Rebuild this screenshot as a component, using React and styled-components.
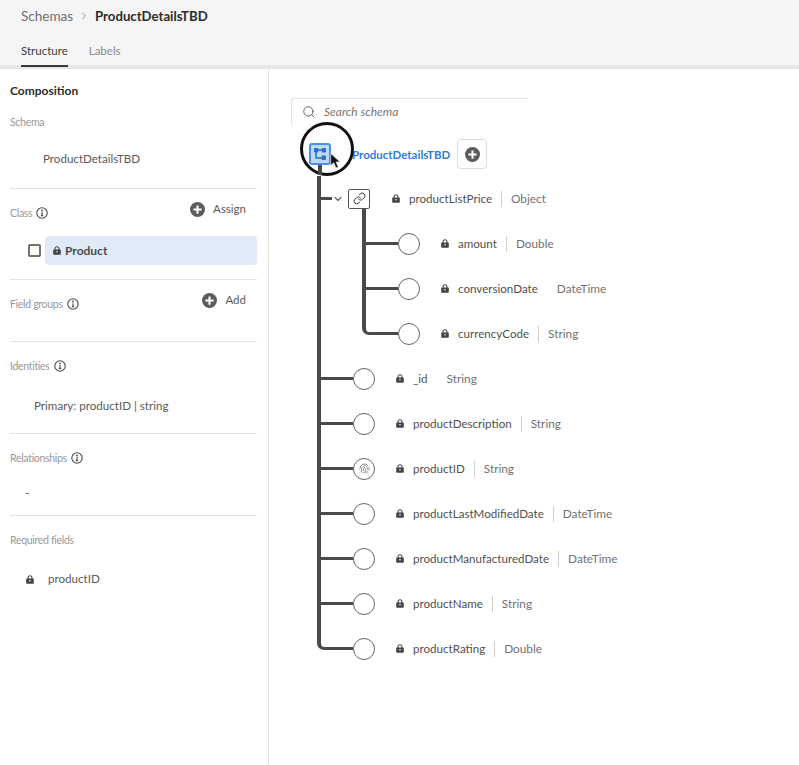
import React from 'react';
import styled, { createGlobalStyle } from 'styled-components';
import { ChevronRight, ChevronDown, Search, Link as LinkIcon, Fingerprint } from 'lucide-react';

const GlobalStyle = createGlobalStyle`
  html, body {
    margin: 0;
    padding: 0;
    background: #fff;
  }
  body {
    font-family: Lato, "Open Sans", sans-serif;
    color: #4b4b4b;
  }
`;

const rootFields = [
  { name: '_id', type: 'String', plain: true },
  { name: 'productDescription', type: 'String' },
  { name: 'productID', type: 'String', identity: true },
  { name: 'productLastModifiedDate', type: 'DateTime' },
  { name: 'productManufacturedDate', type: 'DateTime' },
  { name: 'productName', type: 'String' },
  { name: 'productRating', type: 'Double' },
];

const priceFields = [
  { name: 'amount', type: 'Double' },
  { name: 'conversionDate', type: 'DateTime', plain: true },
  { name: 'currencyCode', type: 'String' },
];

const LockGlyph = ({ size = 8 }) => (
  <svg width={size} height={size + 1} viewBox="0 0 8 9" aria-hidden="true">
    <path
      fillRule="evenodd"
      fill="#444"
      d="M1.5 3.4V2.6C1.5 1.2 2.6.2 4 .2s2.5 1 2.5 2.4v.8h.6c.4 0 .7.3.7.7v3.9c0 .4-.3.7-.7.7H.9c-.4 0-.7-.3-.7-.7V4.1c0-.4.3-.7.7-.7h.6zm1.1 0h2.8v-.8C5.4 1.8 4.8 1.2 4 1.2s-1.4.6-1.4 1.4v.8zM4 5a.8.8 0 0 0-.8.8c0 .4.3.8.8.8s.8-.4.8-.8A.8.8 0 0 0 4 5z"
    />
  </svg>
);

const PlusGlyph = ({ size = 15 }) => (
  <svg width={size} height={size} viewBox="0 0 16 16" aria-hidden="true">
    <circle cx="8" cy="8" r="8" fill="#5c5c5c" />
    <path d="M8 3.6v8.8M3.6 8h8.8" stroke="#fff" strokeWidth="2.2" />
  </svg>
);

const InfoGlyph = () => (
  <svg width="12" height="12" viewBox="0 0 12 12" aria-hidden="true">
    <circle cx="6" cy="6" r="5.2" fill="none" stroke="#4b4b4b" strokeWidth="1.1" />
    <circle cx="6" cy="3.5" r=".9" fill="#4b4b4b" />
    <path d="M6 5.2v3.2M4.9 8.6h2.2" stroke="#4b4b4b" strokeWidth="1.2" />
  </svg>
);

const SchemaGlyph = () => (
  <svg width="14" height="14" viewBox="0 0 14 14" aria-hidden="true">
    <path d="M3 3h7M3 3v8h7" fill="none" stroke="#2c6fc4" strokeWidth="1.5" />
    <rect x="1" y="1" width="4.4" height="4.4" rx=".8" fill="#2c6fc4" />
    <rect x="8.6" y="1" width="4.4" height="4.4" rx=".8" fill="#2c6fc4" />
    <rect x="8.6" y="8.6" width="4.4" height="4.4" rx=".8" fill="#2c6fc4" />
  </svg>
);

const CursorGlyph = () => (
  <svg width="12" height="18" viewBox="0 0 16 22" aria-hidden="true">
    <path d="M1 1v16l4-3.6 3 7 3-1.3-3-6.8h5.4z" fill="#111" stroke="#dcdcdc" strokeWidth="1" />
  </svg>
);

const FieldLabel = ({ field }) => (
  <>
    <LockBox><LockGlyph /></LockBox>
    <FieldName>{field.name}</FieldName>
    <FieldType $plain={field.plain}>{field.type}</FieldType>
  </>
);

const SectionHead = ({ label, info, action }) => (
  <HeadRow>
    <SectionLabel>
      {label}
      {info && <InfoGlyph />}
    </SectionLabel>
    {action && (
      <ActionButton>
        <PlusGlyph />
        {action}
      </ActionButton>
    )}
  </HeadRow>
);

const App = () => (
  <Page>
    <GlobalStyle />
    <Header>
      <Breadcrumb>
        <Crumb>Schemas</Crumb>
        <ChevronRight size={12} color="#8e8e8e" />
        <CurrentCrumb>ProductDetailsTBD</CurrentCrumb>
      </Breadcrumb>
      <Tabs>
        <Tab $active>Structure</Tab>
        <Tab>Labels</Tab>
      </Tabs>
    </Header>
    <Body>
      <Sidebar>
        <Section $pad={21}>
          <Title>Composition</Title>
          <SectionLabel $top={15}>Schema</SectionLabel>
          <Value $top={21} $left={33}>ProductDetailsTBD</Value>
        </Section>
        <Section $pad={14}>
          <SectionHead label="Class" info action="Assign" />
          <ClassRow>
            <Checkbox />
            <ClassChip>
              <LockGlyph />
              Product
            </ClassChip>
          </ClassRow>
        </Section>
        <Section $pad={29} $lead={17}>
          <SectionHead label="Field groups" info action="Add" />
        </Section>
        <Section $pad={19}>
          <SectionHead label="Identities" info />
          <Value $top={24} $left={24}>Primary: productID | string</Value>
        </Section>
        <Section $pad={14}>
          <SectionHead label="Relationships" info />
          <Value $top={19} $left={15}>-</Value>
        </Section>
        <Section $pad={0}>
          <SectionHead label="Required fields" />
          <RequiredRow>
            <LockGlyph />
            productID
          </RequiredRow>
        </Section>
      </Sidebar>
      <Canvas>
        <SearchBox>
          <Search size={14} color="#555" strokeWidth={1.6} />
          <SearchText>Search schema</SearchText>
        </SearchBox>
        <RootRow>
          <Lens />
          <RootIcon><SchemaGlyph /></RootIcon>
          <Pointer><CursorGlyph /></Pointer>
          <RootName>ProductDetailsTBD</RootName>
          <AddButton><PlusGlyph /></AddButton>
        </RootRow>
        <FieldTree>
          <FieldRow>
            <Stem $width={15} />
            <ChevronDown size={12} color="#666" strokeWidth={2.4} />
            <LinkNode><LinkIcon size={13} color="#333" strokeWidth={1.8} /></LinkNode>
            <ObjectLabel><FieldLabel field={{ name: 'productListPrice', type: 'Object' }} /></ObjectLabel>
          </FieldRow>
          <Nested>
            <NestedList>
              {priceFields.map((field, i) => (
                <FieldRow key={field.name}>
                  <Stem $width={36} $last={i === priceFields.length - 1} />
                  <Circle />
                  <FieldLabel field={field} />
                </FieldRow>
              ))}
            </NestedList>
          </Nested>
          {rootFields.map((field, i) => (
            <FieldRow key={field.name}>
              <Stem $width={36} $last={i === rootFields.length - 1} />
              <Circle>{field.identity && <Fingerprint size={11} color="#666" strokeWidth={1.6} />}</Circle>
              <FieldLabel field={field} />
            </FieldRow>
          ))}
        </FieldTree>
      </Canvas>
    </Body>
  </Page>
);

const Page = styled.div`
  width: 799px;
  height: 765px;
  display: flex;
  flex-direction: column;
  overflow: hidden;
  background: #fff;
`;

const Header = styled.header`
  height: 65px;
  padding-left: 21px;
  background: #f5f5f5;
  border-bottom: 4px solid #e6e6e6;
  display: flex;
  flex-direction: column;
  flex-shrink: 0;
`;

const Breadcrumb = styled.nav`
  height: 31px;
  flex-shrink: 0;
  display: flex;
  align-items: center;
  gap: 5px;
`;

const Crumb = styled.span`
  font-size: 13.5px;
  color: #6e6e6e;
`;

const CurrentCrumb = styled.span`
  font-size: 13.2px;
  font-weight: 700;
  color: #2c2c2c;
`;

const Tabs = styled.div`
  display: flex;
  gap: 21px;
  height: 34px;
  flex-shrink: 0;
`;

const Tab = styled.div`
  font-size: 11.5px;
  line-height: 40px;
  height: 36px;
  box-sizing: border-box;
  color: ${(p) => (p.$active ? '#3a3a3a' : '#8a8a8a')};
  border-bottom: 2px solid ${(p) => (p.$active ? '#3a3a3a' : 'transparent')};
`;

const Body = styled.div`
  flex: 1;
  display: flex;
  min-height: 0;
`;

const Sidebar = styled.aside`
  width: 269px;
  box-sizing: border-box;
  padding: 14px 11px 0 10px;
  border-right: 1px solid #e4e4e4;
  flex-shrink: 0;
`;

const Section = styled.section`
  padding-bottom: ${(p) => p.$pad}px;
  & + & {
    border-top: 1px solid #e4e4e4;
    padding-top: ${(p) => p.$lead || 16}px;
  }
`;

const Title = styled.h2`
  margin: 0;
  font-size: 12px;
  line-height: 16px;
  font-weight: 700;
  color: #2c2c2c;
`;

const HeadRow = styled.div`
  display: flex;
  justify-content: space-between;
  align-items: flex-start;
  height: 16px;
`;

const SectionLabel = styled.div`
  display: flex;
  align-items: center;
  gap: 4px;
  margin-top: ${(p) => p.$top || 0}px;
  font-size: 10.6px;
  letter-spacing: -0.35px;
  line-height: 16px;
  color: #999;
`;

const ActionButton = styled.div`
  display: flex;
  align-items: center;
  gap: 8px;
  margin: -4px 11px 0 0;
  font-size: 11.5px;
  line-height: 16px;
  color: #5a5a5a;
`;

const Value = styled.div`
  margin: ${(p) => p.$top}px 0 0 ${(p) => p.$left}px;
  font-size: 11.6px;
  line-height: 16px;
  color: #5a5a5a;
`;

const ClassRow = styled.div`
  display: flex;
  align-items: center;
  gap: 4px;
  margin: 15px 0 0 18px;
`;

const Checkbox = styled.span`
  width: 13px;
  height: 13px;
  box-sizing: border-box;
  border: 2px solid #707070;
  border-radius: 2px;
  flex-shrink: 0;
`;

const ClassChip = styled.div`
  flex: 1;
  height: 29px;
  display: flex;
  align-items: center;
  gap: 4px;
  padding-left: 8px;
  background: #e0ebf7;
  border-radius: 4px;
  font-size: 12px;
  font-weight: 700;
  color: #4b4b4b;
`;

const RequiredRow = styled.div`
  display: flex;
  align-items: center;
  gap: 14px;
  margin: 23px 0 0 16px;
  font-size: 11.6px;
  line-height: 16px;
  color: #5a5a5a;
`;

const Canvas = styled.main`
  flex: 1;
  padding: 29px 0 0 22px;
`;

const SearchBox = styled.div`
  width: 237px;
  height: 28px;
  box-sizing: border-box;
  display: flex;
  align-items: center;
  gap: 8px;
  padding: 0 0 2px 10px;
  border-top: 1px solid #e1e1e1;
  border-left: 1px solid #e1e1e1;
  border-radius: 3px 0 0 3px;
`;

const SearchText = styled.span`
  font-size: 12px;
  font-style: italic;
  color: #777;
`;

const RootRow = styled.div`
  position: relative;
  height: 50px;
  box-sizing: border-box;
  padding-top: 6px;
  margin-left: 18px;
  display: flex;
  align-items: center;
`;

const Lens = styled.div`
  position: absolute;
  left: -9px;
  top: -4px;
  width: 54px;
  height: 54px;
  box-sizing: border-box;
  border: 3px solid #111;
  border-radius: 50%;
  background: #fff;
  z-index: 2;
`;

const RootIcon = styled.div`
  position: relative;
  z-index: 3;
  width: 22px;
  height: 22px;
  box-sizing: border-box;
  display: flex;
  align-items: center;
  justify-content: center;
  background: #bcd8f7;
  border: 2px solid #4a90e6;
  border-radius: 3px;
  &::after {
    content: '';
    position: absolute;
    left: 7px;
    top: 20px;
    width: 4px;
    height: 10px;
    background: #4a4a4a;
  }
`;

const Pointer = styled.div`
  position: absolute;
  left: 21px;
  top: 26px;
  z-index: 4;
  line-height: 0;
`;

const RootName = styled.span`
  margin-left: 21px;
  font-size: 11.5px;
  font-weight: 700;
  color: #2f7bd9;
`;

const AddButton = styled.div`
  width: 30px;
  height: 30px;
  box-sizing: border-box;
  margin-left: 7px;
  display: flex;
  align-items: center;
  justify-content: center;
  border: 1px solid #dedede;
  border-radius: 4px;
`;

const FieldTree = styled.div`
  margin-left: 26px;
`;

const FieldRow = styled.div`
  height: 45px;
  display: flex;
  align-items: center;
`;

const Stem = styled.span`
  align-self: ${(p) => (p.$last ? 'flex-start' : 'stretch')};
  width: ${(p) => p.$width}px;
  height: ${(p) => (p.$last ? '24px' : 'auto')};
  box-sizing: border-box;
  flex-shrink: 0;
  border-left: 4px solid #4a4a4a;
  ${(p) => (p.$last
    ? 'border-bottom: 3px solid #4a4a4a; border-bottom-left-radius: 7px;'
    : 'background: linear-gradient(#4a4a4a, #4a4a4a) no-repeat left center / 100% 3px;')}
`;

const LinkNode = styled.span`
  position: relative;
  width: 22px;
  height: 20px;
  box-sizing: border-box;
  margin-left: 4px;
  display: flex;
  align-items: center;
  justify-content: center;
  border: 1px solid #555;
  border-radius: 2px;
  background: #fff;
  &::after {
    content: '';
    position: absolute;
    left: 13px;
    top: 19px;
    width: 4px;
    height: 14px;
    background: #4a4a4a;
  }
`;

const ObjectLabel = styled.span`
  display: flex;
  align-items: center;
  margin-left: 22px;
`;

const Nested = styled.div`
  border-left: 4px solid #4a4a4a;
  padding-left: 41px;
`;

const NestedList = styled.div`
  display: flex;
  flex-direction: column;
`;

const Circle = styled.span`
  width: 22px;
  height: 22px;
  box-sizing: border-box;
  display: flex;
  align-items: center;
  justify-content: center;
  border: 1.6px solid #666;
  border-radius: 50%;
  background: #fff;
  flex-shrink: 0;
  margin-right: 21px;
`;

const LockBox = styled.span`
  display: flex;
  margin-right: 9px;
`;

const FieldName = styled.span`
  font-size: 11.6px;
  color: #505050;
`;

const FieldType = styled.span`
  margin-left: 9px;
  padding-left: 9px;
  font-size: 11.8px;
  line-height: 16px;
  color: #717171;
  border-left: 1px solid ${(p) => (p.$plain ? 'transparent' : '#cfcfcf')};
`;

export default App;
